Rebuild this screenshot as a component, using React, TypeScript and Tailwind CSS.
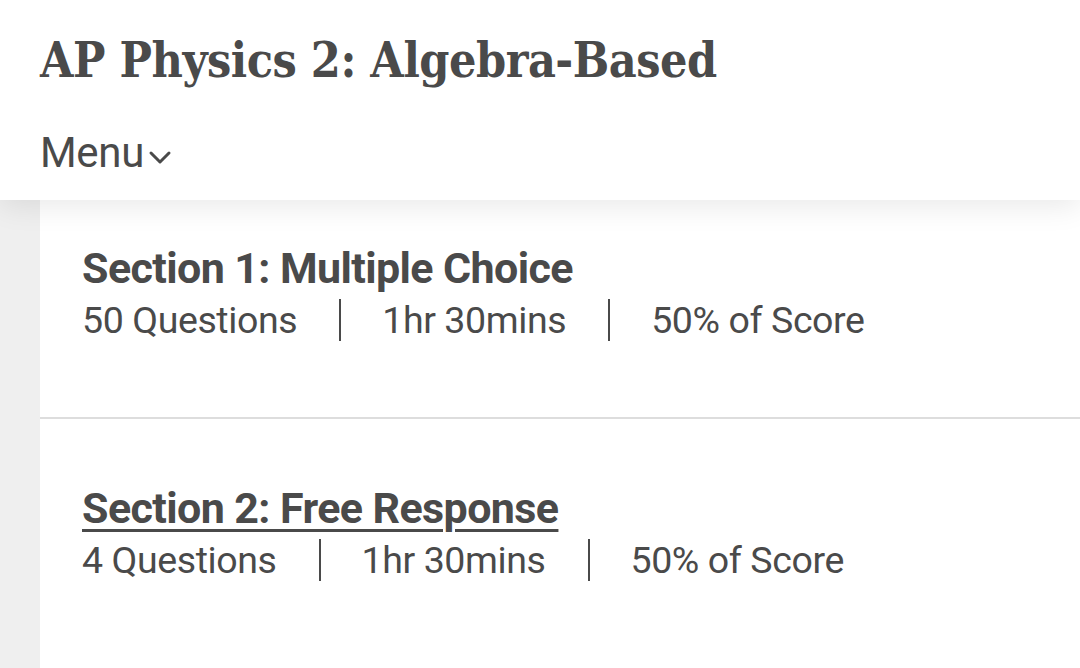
import React from 'react';

const sections = [
  { title: 'Section 1: Multiple Choice', questions: '50 Questions', time: '1hr 30mins', score: '50% of Score', active: false },
  { title: 'Section 2: Free Response', questions: '4 Questions', time: '1hr 30mins', score: '50% of Score', active: true },
];

const Chevron = () => (
  <svg width="24" height="16" viewBox="0 0 24 16" fill="none" className="ml-[4px] mt-[8px]">
    <path d="M3 4l9 9 9-9" stroke="#4a4a4a" strokeWidth="3" strokeLinecap="round" strokeLinejoin="round" />
  </svg>
);

const App = () => {
  return (
    <div className="min-h-screen bg-[#efefef] text-[#4a4a4a] font-['Roboto','Liberation_Sans',sans-serif]">
      <header className="relative z-10 h-[200px] bg-white px-10 pt-[30px] shadow-[0_6px_28px_rgba(0,0,0,0.09)]">
        <h1 className="font-['DejaVu_Serif_Condensed','DejaVu_Serif',serif] text-[48px] font-bold leading-[60px] tracking-[-0.5px] text-[#4a4a4a]">
          AP Physics 2: Algebra-Based
        </h1>
        <button className="mt-[38px] flex items-center text-[42px] leading-[50px] tracking-[-0.3px] text-[#4a4a4a]">
          Menu
          <Chevron />
        </button>
      </header>

      <main className="ml-10 bg-white">
        {sections.map((s, i) => (
          <section
            key={s.title}
            className={`px-[42px] ${i === 0 ? 'pt-[42px] pb-[74px] border-b-2 border-[#dddddd]' : 'pt-[63px] pb-[100px]'}`}
          >
            <h2
              className={`text-[43px] font-bold leading-[52px] tracking-[-0.6px] ${
                s.active ? 'underline decoration-[3px] underline-offset-[6px]' : ''
              }`}
            >
              {s.title}
            </h2>
            <div className="mt-[3px] flex items-center text-[37.5px] leading-[46px] tracking-[-0.4px]">
              <span>{s.questions}</span>
              <span className="ml-[42px] mr-[41px] h-[42px] w-[2px] bg-[#4a4a4a]" />
              <span>{s.time}</span>
              <span className="ml-[42px] mr-[41px] h-[42px] w-[2px] bg-[#4a4a4a]" />
              <span>{s.score}</span>
            </div>
          </section>
        ))}
      </main>
    </div>
  );
};

export default App;
